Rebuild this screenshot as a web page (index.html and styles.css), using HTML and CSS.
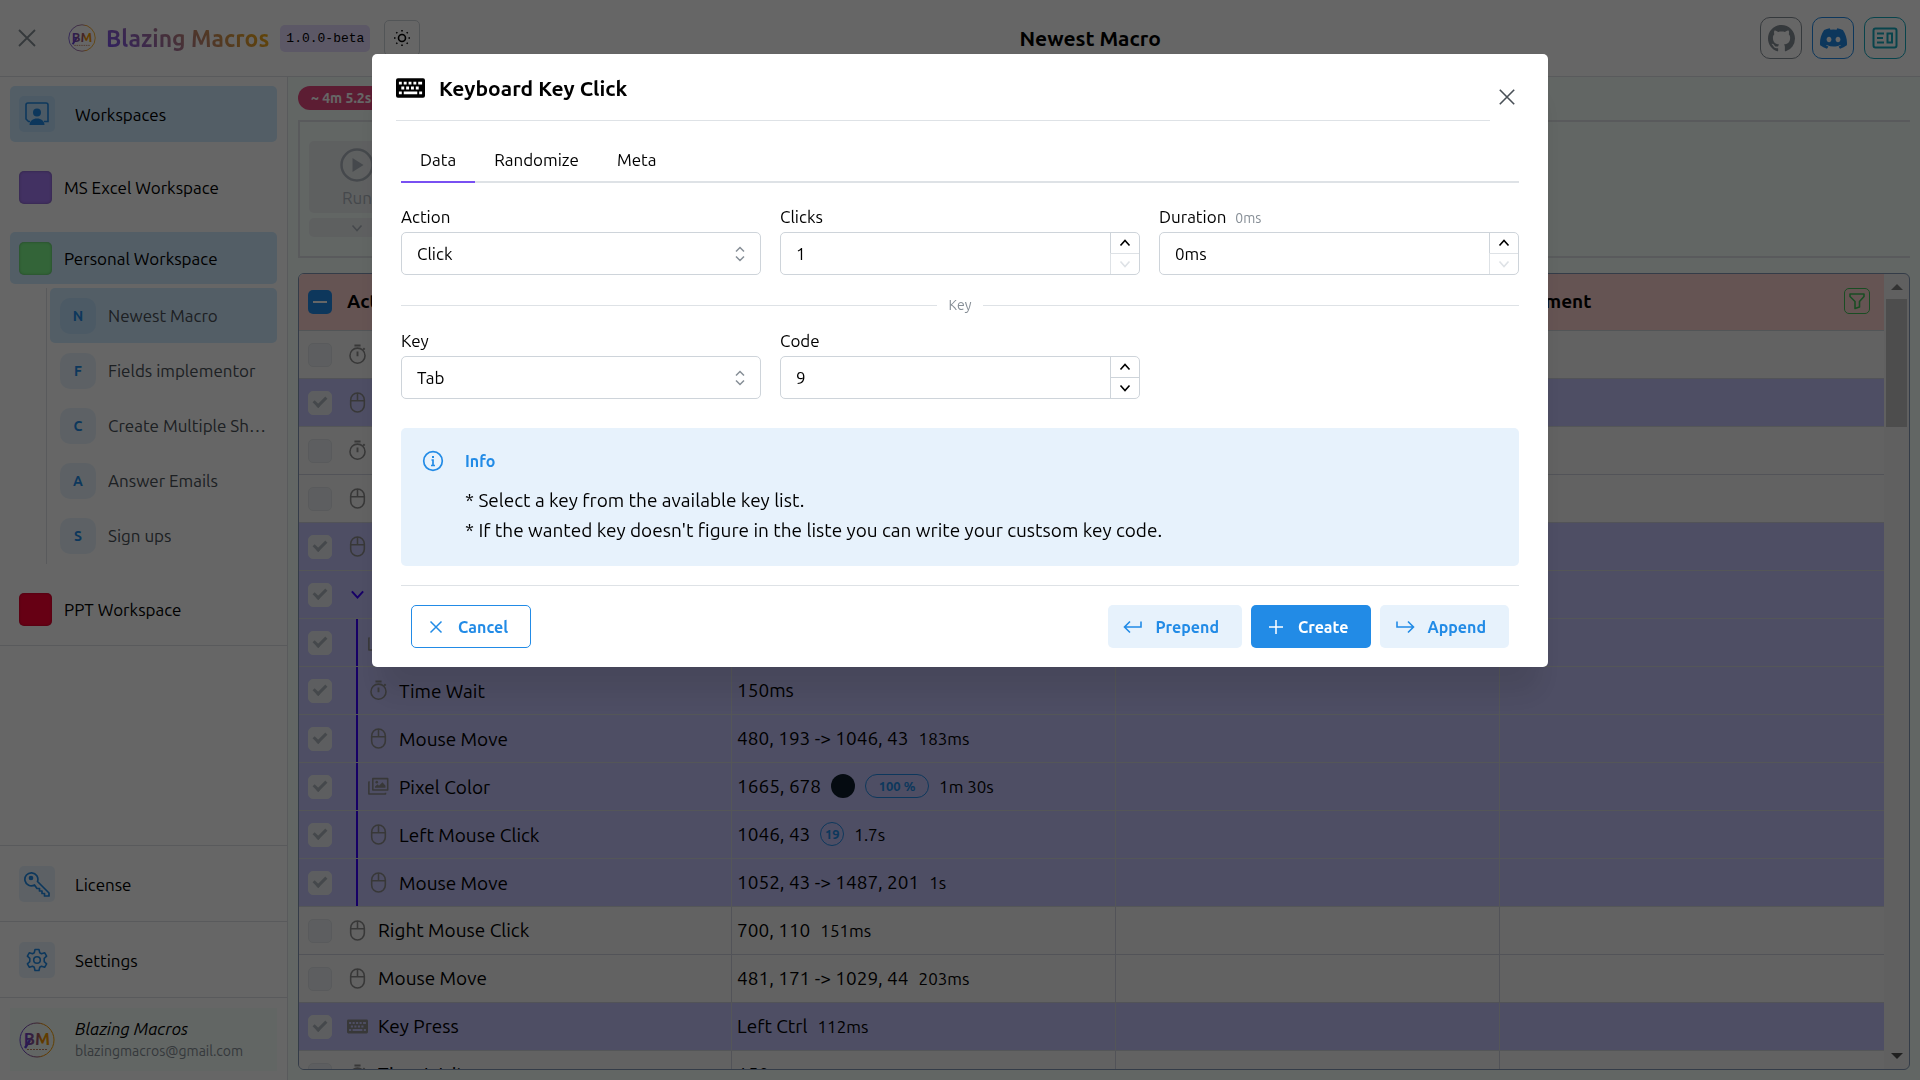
FILE: index.html
```html
<!DOCTYPE html>
<html lang="en">
<head>
    <meta charset="UTF-8">
    <meta name="viewport" content="width=device-width, initial-scale=1.0">
    <title>Blazing Macros</title>
    <link rel="stylesheet" href="styles.css">
</head>
<body>
    <!-- Shared icons -->
    <svg class="sprite" aria-hidden="true">
        <linearGradient id="logo-fill"><stop offset="0" stop-color="#6741d9"/><stop offset="0.550" stop-color="#9c5a6a"/><stop offset="0.650" stop-color="#f08c00"/><stop offset="1" stop-color="#f59f00"/></linearGradient>
        <symbol id="i-close" viewBox="0 0 20 20"><path d="M2 2l16 16M18 2L2 18" fill="none" stroke="currentColor" stroke-width="1.8"/></symbol>
        <symbol id="i-mouse" viewBox="0 0 24 24"><path d="M12 1.2a7.8 7.8 0 0 0-7.8 7.8v6a7.8 7.8 0 0 0 15.6 0V9A7.8 7.8 0 0 0 12 1.200zM12 1.200V10M4.200 10h15.600" fill="none" stroke="currentColor" stroke-width="1.800"/></symbol>
        <symbol id="i-timer" viewBox="0 0 24 24"><path d="M8.500 1.800h7M12 8.500v5.500M18.500 6.500l1.700-1.700" fill="none" stroke="currentColor" stroke-width="2.200"/><circle cx="12" cy="13.300" r="8.600" fill="none" stroke="currentColor" stroke-width="1.800"/></symbol>
        <symbol id="i-image" viewBox="0 0 24 24"><path d="M5.500 3h17v13h-17zM2 7H1v13.500h19V19" fill="none" stroke="currentColor" stroke-width="1.800" stroke-linejoin="round"/><path d="M8 13.500V12l3-2.500 1.500 1.500 4-4 3.500 4v2.500z" fill="currentColor"/><circle cx="10" cy="7" r="1.500" fill="currentColor"/></symbol>
        <symbol id="i-keyboard" viewBox="0 0 30 20"><path fill="currentColor" fill-rule="evenodd" d="M2 0h26a2 2 0 0 1 2 2v16a2 2 0 0 1-2 2H2a2 2 0 0 1-2-2V2a2 2 0 0 1 2-2zM3 3.500v3h3v-3zM8 3.500v3h3v-3zM13 3.500v3h3v-3zM18 3.500v3h3v-3zM23 3.500v3h4v-3zM5.500 8.500v3h3v-3zM10.500 8.500v3h3v-3zM15.500 8.500v3h3v-3zM20.500 8.500v3h3v-3zM3 13.500v3h3v-3zM8 13.500v3h14v-3zM24 13.500v3h3v-3z"/></symbol>
        <symbol id="i-down" viewBox="0 0 12 12"><path d="M1.500 3.500L6 8.500l4.500-5" fill="none" stroke="currentColor" stroke-width="1.600"/></symbol>
        <symbol id="i-up" viewBox="0 0 12 12"><path d="M1.500 8.500L6 3.500l4.500 5" fill="none" stroke="currentColor" stroke-width="1.600"/></symbol>
        <symbol id="i-updown" viewBox="0 0 12 18"><path d="M2 6.500l4-4 4 4M2 11.500l4 4 4-4" fill="none" stroke="currentColor" stroke-width="1.500"/></symbol>
    </svg>

    <header class="topbar">
        <button class="menu-close" aria-label="Close menu"><svg width="20" height="20"><use href="#i-close"/></svg></button>
        <svg class="brand-logo" width="28" height="28" viewBox="0 0 36 36">
            <circle cx="18" cy="18" r="17" fill="none" stroke="url(#logo-fill)"/>
            <path d="M6 26l5-8" stroke="#6741d9" stroke-width="2.500"/>
            <text x="18" y="23" text-anchor="middle" class="logo-text" fill="url(#logo-fill)">BM</text>
            <path d="M8 27.500h21" stroke="#c08060" stroke-dasharray="2 1"/>
        </svg>
        <span class="brand-name">Blazing Macros</span>
        <code class="version">1.0.0-beta</code>
        <button class="theme-button" aria-label="Toggle theme">
            <svg width="20" height="20" viewBox="0 0 20 20" fill="none" stroke="currentColor" stroke-width="1.600"><circle cx="10" cy="10" r="3.500"/><path d="M10 2v1.500M10 16.500V18M2 10h1.500M16.500 10H18M4.300 4.300l1 1M14.700 14.700l1 1M4.300 15.700l1-1M14.700 5.300l1-1"/></svg>
        </button>
        <h1 class="page-title">Newest Macro</h1>
        <nav class="social">
            <a href="#" class="social-link github" aria-label="GitHub"><svg width="27" height="27" viewBox="0 0 16 16"><path fill="currentColor" d="M8 0C3.580 0 0 3.580 0 8c0 3.540 2.290 6.530 5.470 7.590.4.070.55-.17.55-.38 0-.19-.01-.82-.01-1.490-2.010.37-2.530-.49-2.690-.94-.09-.23-.48-.94-.82-1.130-.28-.15-.68-.52-.01-.53.63-.01 1.080.58 1.230.82.72 1.210 1.870.87 2.330.66.07-.52.28-.87.51-1.070-1.780-.2-3.640-.89-3.640-3.950 0-.87.31-1.590.82-2.150-.08-.2-.36-1.020.08-2.120 0 0 .67-.21 2.200.82.64-.18 1.320-.27 2-.27s1.360.09 2 .27c1.530-1.040 2.200-.82 2.200-.82.44 1.100.16 1.920.08 2.120.51.56.82 1.270.82 2.150 0 3.070-1.870 3.750-3.650 3.950.29.25.54.73.54 1.480 0 1.070-.01 1.930-.01 2.200 0 .21.15.46.55.38A8.010 8.010 0 0 0 16 8c0-4.420-3.580-8-8-8z"/></svg></a>
            <a href="#" class="social-link discord" aria-label="Discord"><svg width="27" height="27" viewBox="0 0 16 16"><path fill="currentColor" d="M13.545 2.907a13.200 13.200 0 0 0-3.257-1.011.05.05 0 0 0-.052.025c-.141.25-.297.577-.406.833a12.200 12.200 0 0 0-3.658 0 8 8 0 0 0-.412-.833.05.05 0 0 0-.052-.025c-1.125.194-2.220.534-3.257 1.011a.04.04 0 0 0-.021.018C.356 6.024-.213 9.047.066 12.032q.003.022.021.037a13.300 13.300 0 0 0 3.995 2.020.05.05 0 0 0 .056-.019q.463-.63.818-1.329a.05.05 0 0 0-.01-.059l-.018-.011a9 9 0 0 1-1.248-.595.05.05 0 0 1-.02-.066l.015-.019q.127-.095.248-.195a.05.05 0 0 1 .051-.007c2.619 1.196 5.454 1.196 8.041 0a.05.05 0 0 1 .053.007q.121.100.248.195a.05.05 0 0 1-.004.085 8 8 0 0 1-1.249.594.05.05 0 0 0-.030.030.05.05 0 0 0 .003.041c.240.465.515.909.817 1.329a.05.05 0 0 0 .056.019 13.200 13.200 0 0 0 4.001-2.020.05.05 0 0 0 .021-.037c.334-3.451-.559-6.449-2.366-9.106a.03.03 0 0 0-.020-.019M5.347 10.214c-.789 0-1.438-.724-1.438-1.612s.637-1.613 1.438-1.613c.807 0 1.450.730 1.438 1.613 0 .888-.637 1.612-1.438 1.612m5.316 0c-.788 0-1.438-.724-1.438-1.612s.637-1.613 1.438-1.613c.807 0 1.451.730 1.438 1.613 0 .888-.631 1.612-1.438 1.612"/></svg></a>
            <a href="#" class="social-link news" aria-label="News"><svg width="26" height="26" viewBox="0 0 26 26" fill="none" stroke="currentColor" stroke-width="2"><rect x="1.500" y="3.500" width="23" height="19" rx="2"/><path d="M5 8.500h7M5 13h6M5 17.500h7"/><rect x="15.500" y="8.500" width="4.500" height="9"/></svg></a>
        </nav>
    </header>

    <div class="layout">
        <aside class="sidebar">
            <a href="#" class="nav-item active">
                <span class="nav-icon"><svg width="24" height="24" viewBox="0 0 24 24"><path d="M5 19.500H3.500L1 17V3a2 2 0 0 1 2-2h18a2 2 0 0 1 2 2v16.500h-4" fill="none" stroke="currentColor" stroke-width="1.600"/><circle cx="12" cy="10.500" r="4" fill="currentColor"/><path d="M4.500 23c0-4 3.500-6.500 7.500-6.500s7.500 2.500 7.500 6.500z" fill="currentColor"/></svg></span>
                Workspaces
            </a>
            <a href="#" class="workspace"><span class="swatch violet"></span>MS Excel Workspace</a>
            <div>
                <a href="#" class="workspace active"><span class="swatch green"></span>Personal Workspace</a>
                <div class="macros">
                    <a href="#" class="macro active"><span class="letter">N</span><span class="macro-name">Newest Macro</span></a>
                    <a href="#" class="macro"><span class="letter">F</span><span class="macro-name">Fields implementor</span></a>
                    <a href="#" class="macro"><span class="letter">C</span><span class="macro-name">Create Multiple Sheets</span></a>
                    <a href="#" class="macro"><span class="letter">A</span><span class="macro-name">Answer Emails</span></a>
                    <a href="#" class="macro"><span class="letter">S</span><span class="macro-name">Sign ups</span></a>
                </div>
            </div>
            <a href="#" class="workspace"><span class="swatch red"></span>PPT Workspace</a>

            <div class="sidebar-bottom">
                <div class="section">
                    <a href="#" class="nav-item">
                        <span class="nav-icon"><svg width="26" height="26" viewBox="0 0 26 26" fill="none" stroke="currentColor" stroke-width="1.700" stroke-linejoin="round"><path d="M13.500 10.500L25 22v3h-4.500v-2.500H18v-2.500h-2.500v-2.500H13L10.500 14A6.500 6.500 0 1 1 13.500 10.500z"/><circle cx="7" cy="7" r="1.500" fill="currentColor"/></svg></span>
                        License
                    </a>
                </div>
                <div class="section">
                    <a href="#" class="nav-item">
                        <span class="nav-icon"><svg width="24" height="24" viewBox="0 0 24 24" fill="none" stroke="currentColor" stroke-width="1.600" stroke-linejoin="round"><path d="M10 1.500h4l.7 3.200 1.800 1 3.100-1 2 3.500-2.400 2.200v3.200l2.400 2.200-2 3.500-3.100-1-1.800 1-.7 3.200h-4l-.7-3.200-1.800-1-3.100 1-2-3.500 2.400-2.200v-3.200L2.400 8.200l2-3.500 3.100 1 1.800-1z"/><circle cx="12" cy="12" r="3.300"/></svg></span>
                        Settings
                    </a>
                </div>
                <div class="section">
                    <div class="user">
                        <svg width="36" height="36" viewBox="0 0 36 36">
                            <circle cx="18" cy="18" r="17" fill="none" stroke="url(#logo-fill)"/>
                            <path d="M6 26l5-8" stroke="#6741d9" stroke-width="2.500"/>
                            <text x="18" y="23" text-anchor="middle" class="logo-text" fill="url(#logo-fill)">BM</text>
                            <path d="M8 27.500h21" stroke="#c08060" stroke-dasharray="2 1"/>
                        </svg>
                        <div>
                            <div class="user-name">Blazing Macros</div>
                            <div class="user-mail">blazingmacros@gmail.com</div>
                        </div>
                    </div>
                </div>
            </div>
        </aside>

        <main class="main">
            <span class="estimate">~ 4m 5.2s</span>
            <div class="toolbar">
                <div class="run-group">
                    <button class="run" disabled><svg width="34" height="34" viewBox="0 0 34 34"><circle cx="17" cy="17" r="15.500" fill="none" stroke="currentColor" stroke-width="2.500"/><path d="M12.500 10l11 7-11 7z" fill="currentColor"/></svg>Run</button>
                    <button class="run-more" disabled aria-label="Run options"><svg width="12" height="12"><use href="#i-down"/></svg></button>
                </div>
            </div>

            <div class="table-box">
                <div class="table-scroll">
                    <table class="actions">
                        <colgroup><col class="col-check"><col class="col-action"><col><col><col></colgroup>
                        <thead>
                            <tr>
                                <th><button class="select-all" aria-label="Select all"></button></th>
                                <th>Action</th>
                                <th>Data</th>
                                <th>Meta</th>
                                <th><div class="head-cell">Comment
                                    <button class="filter" aria-label="Filter"><svg width="18" height="18" viewBox="0 0 18 18" fill="none" stroke="currentColor" stroke-width="1.600" stroke-linejoin="round"><path d="M2 2h14v2.500l-4.500 5V15l-4.500 1.500V9.500L2 4.500z"/></svg></button>
                                </div></th>
                            </tr>
                        </thead>
                        <tbody>
                            <tr><td><input type="checkbox" disabled aria-label="Select row"></td><td><div class="cell"><svg><use href="#i-timer"/></svg>Time Wait</div></td><td></td><td></td><td></td></tr>
                            <tr class="selected"><td><input type="checkbox" checked disabled aria-label="Select row"></td><td><div class="cell"><svg><use href="#i-mouse"/></svg>Mouse Move</div></td><td></td><td></td><td></td></tr>
                            <tr><td><input type="checkbox" disabled aria-label="Select row"></td><td><div class="cell"><svg><use href="#i-timer"/></svg>Time Wait</div></td><td></td><td></td><td></td></tr>
                            <tr><td><input type="checkbox" disabled aria-label="Select row"></td><td><div class="cell"><svg><use href="#i-mouse"/></svg>Mouse Move</div></td><td></td><td></td><td></td></tr>
                            <tr class="selected"><td><input type="checkbox" checked disabled aria-label="Select row"></td><td><div class="cell"><svg><use href="#i-mouse"/></svg>Mouse Move</div></td><td></td><td></td><td></td></tr>
                            <tr class="selected"><td><input type="checkbox" checked disabled aria-label="Select row"></td><td><div class="cell group"><svg><use href="#i-down"/></svg>Loop</div></td><td></td><td></td><td></td></tr>
                            <tr class="selected nested"><td><input type="checkbox" checked disabled aria-label="Select row"></td><td><div class="cell"><svg><use href="#i-image"/></svg>Pixel Color</div></td><td></td><td></td><td></td></tr>
                            <tr class="selected nested"><td><input type="checkbox" checked disabled aria-label="Select row"></td><td><div class="cell"><svg><use href="#i-timer"/></svg>Time Wait</div></td><td>150ms</td><td></td><td></td></tr>
                            <tr class="selected nested"><td><input type="checkbox" checked disabled aria-label="Select row"></td><td><div class="cell"><svg><use href="#i-mouse"/></svg>Mouse Move</div></td><td><div class="values">480, 193 -&gt; 1046, 43 <small>183ms</small></div></td><td></td><td></td></tr>
                            <tr class="selected nested"><td><input type="checkbox" checked disabled aria-label="Select row"></td><td><div class="cell"><svg><use href="#i-image"/></svg>Pixel Color</div></td><td><div class="values">1665, 678 <span class="color-dot"></span><span class="pill percent">100 %</span><small>1m 30s</small></div></td><td></td><td></td></tr>
                            <tr class="selected nested"><td><input type="checkbox" checked disabled aria-label="Select row"></td><td><div class="cell"><svg><use href="#i-mouse"/></svg>Left Mouse Click</div></td><td><div class="values">1046, 43 <span class="pill">19</span><small>1.7s</small></div></td><td></td><td></td></tr>
                            <tr class="selected nested"><td><input type="checkbox" checked disabled aria-label="Select row"></td><td><div class="cell"><svg><use href="#i-mouse"/></svg>Mouse Move</div></td><td><div class="values">1052, 43 -&gt; 1487, 201 <small>1s</small></div></td><td></td><td></td></tr>
                            <tr><td><input type="checkbox" disabled aria-label="Select row"></td><td><div class="cell"><svg><use href="#i-mouse"/></svg>Right Mouse Click</div></td><td><div class="values">700, 110 <small>151ms</small></div></td><td></td><td></td></tr>
                            <tr><td><input type="checkbox" disabled aria-label="Select row"></td><td><div class="cell"><svg><use href="#i-mouse"/></svg>Mouse Move</div></td><td><div class="values">481, 171 -&gt; 1029, 44 <small>203ms</small></div></td><td></td><td></td></tr>
                            <tr class="selected"><td><input type="checkbox" checked disabled aria-label="Select row"></td><td><div class="cell"><svg><use href="#i-keyboard"/></svg>Key Press</div></td><td><div class="values">Left Ctrl <small>112ms</small></div></td><td></td><td></td></tr>
                            <tr><td><input type="checkbox" disabled aria-label="Select row"></td><td><div class="cell"><svg><use href="#i-timer"/></svg>Time Wait</div></td><td>150ms</td><td></td><td></td></tr>
                        </tbody>
                    </table>
                </div>
                <div class="scrollbar">
                    <span class="arrow-up"></span>
                    <span class="thumb"></span>
                    <span class="arrow-down"></span>
                </div>
            </div>
        </main>
    </div>

    <div class="overlay">
        <div class="modal" role="dialog" aria-labelledby="modal-title">
            <div class="modal-header">
                <h2 class="modal-title" id="modal-title"><svg width="29" height="20"><use href="#i-keyboard"/></svg>Keyboard Key Click</h2>
                <button class="modal-close" aria-label="Close"><svg width="18" height="18"><use href="#i-close"/></svg></button>
            </div>
            <div class="modal-body">
                <div class="tabs" role="tablist">
                    <button class="tab active" role="tab" aria-selected="true">Data</button>
                    <button class="tab" role="tab">Randomize</button>
                    <button class="tab" role="tab">Meta</button>
                </div>

                <div class="fields">
                    <div class="field">
                        <label for="action">Action</label>
                        <div class="control"><select id="action"><option>Click</option></select><svg class="select-icon" width="12" height="18"><use href="#i-updown"/></svg></div>
                    </div>
                    <div class="field">
                        <label for="clicks">Clicks</label>
                        <div class="control"><input id="clicks" type="text" value="1">
                            <div class="stepper"><button aria-label="Increase"><svg width="12" height="12"><use href="#i-up"/></svg></button><button disabled aria-label="Decrease"><svg width="12" height="12"><use href="#i-down"/></svg></button></div></div>
                    </div>
                    <div class="field">
                        <label for="duration">Duration <span class="hint">0ms</span></label>
                        <div class="control"><input id="duration" type="text" value="0ms">
                            <div class="stepper"><button aria-label="Increase"><svg width="12" height="12"><use href="#i-up"/></svg></button><button disabled aria-label="Decrease"><svg width="12" height="12"><use href="#i-down"/></svg></button></div></div>
                    </div>
                </div>

                <div class="divider">Key</div>

                <div class="fields">
                    <div class="field">
                        <label for="key">Key</label>
                        <div class="control"><select id="key"><option>Tab</option></select><svg class="select-icon" width="12" height="18"><use href="#i-updown"/></svg></div>
                    </div>
                    <div class="field">
                        <label for="code">Code</label>
                        <div class="control"><input id="code" type="text" value="9">
                            <div class="stepper"><button aria-label="Increase"><svg width="12" height="12"><use href="#i-up"/></svg></button><button aria-label="Decrease"><svg width="12" height="12"><use href="#i-down"/></svg></button></div></div>
                    </div>
                </div>

                <div class="info">
                    <svg width="24" height="24" viewBox="0 0 24 24" fill="none" stroke="currentColor" stroke-width="1.700"><circle cx="12" cy="12" r="9.300"/><path d="M10.500 11H12v5.500M10 16.500h4"/><path d="M12 7v2" stroke-width="2"/></svg>
                    <div>
                        <div class="info-title">Info</div>
                        <p>* Select a key from the available key list.</p>
                        <p>* If the wanted key doesn't figure in the liste you can write your custsom key code.</p>
                    </div>
                </div>

                <div class="modal-footer">
                    <button class="btn outline"><svg width="20" height="20" viewBox="0 0 20 20" fill="none" stroke="currentColor" stroke-width="1.500"><path d="M4.500 4.500l11 11M15.500 4.500l-11 11"/></svg>Cancel</button>
                    <button class="btn light push"><svg width="20" height="20" viewBox="0 0 20 20" fill="none" stroke="currentColor" stroke-width="1.600"><path d="M18 4.500V10H2M7 4.500L1.500 10 7 15.500"/></svg>Prepend</button>
                    <button class="btn filled"><svg width="20" height="20" viewBox="0 0 20 20" fill="none" stroke="currentColor" stroke-width="1.500"><path d="M10 3v14M3 10h14"/></svg>Create</button>
                    <button class="btn light"><svg width="20" height="20" viewBox="0 0 20 20" fill="none" stroke="currentColor" stroke-width="1.600"><path d="M2 4.500V10h16M13 4.500l5.500 5.500-5.500 5.500"/></svg>Append</button>
                </div>
            </div>
        </div>
    </div>
</body>
</html>
```

FILE: styles.css
```css
* {
    box-sizing: border-box;
}

body {
    margin: 0;
    height: 100vh;
    display: flex;
    flex-direction: column;
    overflow: hidden;
    font-family: Ubuntu, "Noto Sans", sans-serif;
    font-size: 17px;
    color: #000;
    background-color: #fff;
}

a {
    color: inherit;
    text-decoration: none;
}

button, input, select {
    font: inherit;
    color: inherit;
}

button {
    display: flex;
    align-items: center;
    justify-content: center;
    padding: 0;
    border: none;
    background: none;
    cursor: pointer;
}

.sprite {
    position: absolute;
    width: 0;
    height: 0;
}

.logo-text {
    font-size: 17px;
    font-weight: bold;
}

/* Top bar */
.topbar {
    display: flex;
    align-items: center;
    height: 77px;
    padding: 0 14px 0 17px;
    border-bottom: 1px solid #dee2e6;
    flex-shrink: 0;
}

.menu-close {
    color: #868e96;
}

.brand-logo {
    margin-left: 31px;
}

.brand-name {
    margin-left: 10px;
    font-size: 23px;
    font-weight: bold;
    background: linear-gradient(45deg, #7950f2, #fab005);
    background-clip: text;
    -webkit-background-clip: text;
    color: transparent;
}

.version {
    margin-left: 11px;
    padding: 0 6px;
    border-radius: 5px;
    background-color: #e5dbff;
    font-family: "Liberation Mono", monospace;
    font-size: 13px;
    line-height: 27px;
}

.theme-button {
    margin-left: 14px;
    width: 36px;
    height: 36px;
    border: 1px solid #ced4da;
    border-radius: 5px;
}

.page-title {
    flex: 1;
    margin: 0;
    text-align: center;
    font-size: 21px;
    font-weight: bold;
}

.social {
    display: flex;
    gap: 10px;
}

.social-link {
    display: flex;
    align-items: center;
    justify-content: center;
    width: 42px;
    height: 42px;
    border: 1px solid;
    border-radius: 10px;
}

.github {
    color: #868e96;
}

.discord {
    color: #228be6;
}

.news {
    color: #15aabf;
}

/* Sidebar */
.layout {
    display: flex;
    flex: 1;
    min-height: 0;
}

.sidebar {
    display: flex;
    flex-direction: column;
    gap: 19px;
    width: 288px;
    padding-top: 9px;
    border-right: 1px solid #dee2e6;
    flex-shrink: 0;
}

.nav-item, .workspace {
    display: flex;
    align-items: center;
    margin: 0 10px;
    padding: 0 9px;
    border-radius: 5px;
}

.nav-item {
    gap: 20px;
    height: 56px;
}

.workspace {
    gap: 12px;
    height: 52px;
}

.nav-item.active, .workspace.active, .macro.active {
    background-color: #d0ebff;
}

.nav-icon {
    display: flex;
    align-items: center;
    justify-content: center;
    width: 36px;
    height: 36px;
    border-radius: 5px;
    background-color: rgba(34, 139, 230, 0.1);
    color: #228be6;
}

.swatch {
    width: 33px;
    height: 33px;
    border-radius: 5px;
    box-shadow: inset 0 0 3px rgba(0, 0, 0, 0.3);
}

.violet {
    background-color: #a67af4;
}

.green {
    background-color: #7ffa8c;
}

.red {
    background-color: #ff0033;
}

.macros {
    margin: 4px 10px 0 46px;
    padding: 0 0 1px 3px;
    border-left: 1px solid #dee2e6;
}

.macro {
    display: flex;
    align-items: center;
    gap: 12px;
    height: 55px;
    padding: 0 10px;
    border-radius: 5px;
    color: #495057;
}

.macro-name {
    overflow: hidden;
    white-space: nowrap;
    text-overflow: ellipsis;
}

.letter {
    display: flex;
    align-items: center;
    justify-content: center;
    width: 36px;
    height: 36px;
    border-radius: 10px;
    background-color: rgba(34, 139, 230, 0.1);
    color: #228be6;
    font-size: 14px;
    font-weight: bold;
    flex-shrink: 0;
}

.sidebar-bottom {
    flex: 1;
    display: flex;
    flex-direction: column;
    margin-top: -9px;
    border-top: 1px solid #dee2e6;
}

.section {
    padding: 10px 0 9px;
    border-top: 1px solid #dee2e6;
}

.section:first-child {
    margin-top: auto;
}

.user {
    display: flex;
    align-items: center;
    gap: 20px;
    margin: 0 10px;
    padding: 9px;
    background-color: #f5fffa;
}

.user-name {
    font-style: italic;
    line-height: 24px;
}

.user-mail {
    font-size: 14px;
    line-height: 21px;
    color: #868e96;
}

/* Main area */
.main {
    flex: 1;
    min-width: 0;
    display: flex;
    flex-direction: column;
    padding: 9px 10px 10px;
    background-color: #f5fffa;
}

.estimate {
    align-self: flex-start;
    padding: 0 13px;
    border-radius: 12px;
    background-color: #e64980;
    color: #fff;
    font-size: 14px;
    font-weight: bold;
    line-height: 24px;
}

.toolbar {
    height: 138px;
    margin: 10px 0 15px;
    padding: 19px 9px;
    border: 2px solid #dee2e6;
    border-right: none;
    flex-shrink: 0;
}

.run-group {
    display: flex;
    flex-direction: column;
    gap: 5px;
    width: 96px;
    color: #adb5bd;
}

.run, .run-more {
    border-radius: 5px;
    background-color: #eceff1;
}

.run {
    flex-direction: column;
    gap: 6px;
    height: 72px;
}

.run-more {
    height: 19px;
}

.table-box {
    display: flex;
    flex: 1;
    min-height: 0;
    border: 1px solid #8296b4;
    border-radius: 6px;
    overflow: hidden;
    background-color: #f1f1f1;
}

.table-scroll {
    flex: 1;
    min-width: 0;
    overflow: hidden;
}

.actions {
    width: 100%;
    table-layout: fixed;
    border-collapse: separate;
    border-spacing: 0;
    background-color: #f5f5f5;
    font-size: 19px;
}

.col-check {
    width: 43px;
}

.col-action {
    width: 390px;
}

.actions th {
    height: 57px;
    padding: 0 5px 2px;
    border-bottom: 1px solid #ced4da;
    background-color: #fdd2d0;
    text-align: left;
    font-weight: bold;
}

.actions td {
    height: 48px;
    padding: 0 5px 1px;
    border-bottom: 1px solid #cdd0dc;
    border-right: 1px solid #cdd0dc;
    white-space: nowrap;
}

.actions td:first-child, .actions th:first-child {
    padding: 0 9px;
    border-right: none;
}

.actions td:last-child {
    border-right: none;
}

.selected {
    background-color: #c3c3fa;
}

.actions .selected td {
    border-color: #d2d6dc;
}

.head-cell {
    display: flex;
    align-items: center;
    justify-content: space-between;
    padding-right: 9px;
}

.filter {
    width: 26px;
    height: 26px;
    border: 1px solid #40c057;
    border-radius: 5px;
    color: #40c057;
}

.select-all {
    width: 24px;
    height: 24px;
    border-radius: 5px;
    background-color: #228be6;
}

.select-all::after {
    content: "";
    width: 14px;
    height: 2px;
    background-color: #fff;
}

.actions input {
    appearance: none;
    display: grid;
    place-items: center;
    width: 24px;
    height: 24px;
    margin: 0;
    border: 1px solid #dee2e6;
    border-radius: 5px;
    background-color: #e9ecef;
}

.actions input:checked {
    border-color: #e9ecef;
}

.actions input:checked::after {
    content: "";
    width: 5px;
    height: 10px;
    margin-top: -4px;
    border: solid #adb5bd;
    border-width: 0 3px 3px 0;
    transform: rotate(45deg);
}

.cell {
    display: flex;
    align-items: center;
    gap: 10px;
    height: 46px;
}

.cell svg {
    width: 21px;
    height: 21px;
    color: #8c8c8c;
}

.cell.group svg {
    padding: 3px;
    color: #3800ff;
}

.nested td:nth-child(2) {
    padding-bottom: 0;
}

.nested .cell {
    height: 47px;
    margin-left: 9px;
    padding-left: 10px;
    border-left: 2px solid #3800ff;
}

.values {
    display: flex;
    align-items: center;
    gap: 10px;
}

.values small {
    font-size: 17px;
}

.color-dot {
    width: 24px;
    height: 24px;
    border-radius: 50%;
    background-color: #0e1d2b;
}

.pill {
    min-width: 24px;
    border: 1px solid #228be6;
    border-radius: 12px;
    color: #228be6;
    font-size: 13px;
    font-weight: bold;
    line-height: 22px;
    text-align: center;
}

.percent {
    width: 64px;
}

.scrollbar {
    display: flex;
    flex-direction: column;
    align-items: center;
    width: 25px;
    padding: 10px 0;
}

.arrow-up, .arrow-down {
    border: 6px solid transparent;
}

.arrow-up {
    border-top: none;
    border-bottom-color: #808080;
}

.thumb {
    width: 21px;
    height: 128px;
    margin-top: 9px;
    background-color: #c1c1c1;
}

.arrow-down {
    margin-top: auto;
    border-bottom: none;
    border-top-color: #505050;
}

/* Modal */
.overlay {
    position: fixed;
    inset: 0;
    display: flex;
    justify-content: center;
    align-items: flex-start;
    padding: 5vh;
    background-color: rgba(0, 0, 0, 0.6);
}

.modal {
    width: 1176px;
    border-radius: 5px;
    background-color: #fff;
    box-shadow: 0 1px 4px rgba(0, 0, 0, 0.05), 0 34px 28px -8px rgba(0, 0, 0, 0.1);
}

.modal-header {
    display: flex;
    align-items: flex-start;
    padding: 19px 24px 0;
}

.modal-title {
    flex: 1;
    display: flex;
    align-items: center;
    gap: 14px;
    height: 48px;
    margin: 0;
    padding-bottom: 17px;
    border-bottom: 1px solid #dee2e6;
    font-size: 21px;
    font-weight: bold;
}

.modal-close {
    width: 34px;
    height: 48px;
    color: #495057;
}

.modal-body {
    padding: 15px 29px 19px;
}

.tabs {
    display: flex;
    border-bottom: 2px solid #dee2e6;
}

.tab {
    height: 47px;
    margin-bottom: -2px;
    padding: 1px 19px 0;
    border-bottom: 2px solid transparent;
}

.tab.active {
    border-color: #7950f2;
}

.fields {
    display: grid;
    grid-template-columns: repeat(3, 1fr);
    gap: 19px;
}

.tabs + .fields {
    margin-top: 20px;
}

.field label {
    display: block;
    margin-bottom: 2px;
    line-height: 27px;
}

.hint {
    margin-left: 5px;
    font-size: 14px;
    line-height: 14px;
    color: #868e96;
}

.control {
    display: flex;
    position: relative;
    height: 43px;
    border: 1px solid #ced4da;
    border-radius: 5px;
    overflow: hidden;
}

.control input, .control select {
    flex: 1;
    min-width: 0;
    padding: 0 15px;
    border: none;
    outline: none;
    appearance: none;
    background: none;
}

.select-icon {
    position: absolute;
    right: 14px;
    top: 12px;
    color: #868e96;
    pointer-events: none;
}

.stepper {
    display: flex;
    flex-direction: column;
    width: 29px;
}

.stepper button {
    flex: 1;
    border-left: 1px solid #ced4da;
}

.stepper button + button {
    border-top: 1px solid #ced4da;
}

.stepper button:disabled {
    color: #dee2e6;
    border-color: #dee2e6;
}

.divider {
    display: flex;
    align-items: center;
    gap: 12px;
    margin: 20px 0 12px;
    font-size: 14px;
    line-height: 20px;
    color: #868e96;
}

.divider::before, .divider::after {
    content: "";
    flex: 1;
    border-top: 1px solid #dee2e6;
}

.info {
    display: flex;
    gap: 20px;
    margin: 29px 0 19px;
    padding: 20px 20px 21px;
    border-radius: 5px;
    background-color: #e7f2fc;
    font-size: 19px;
    line-height: 30px;
}

.info svg {
    margin-top: 1px;
    color: #228be6;
}

.info-title {
    margin-bottom: 11px;
    font-size: 16px;
    font-weight: bold;
    line-height: 26px;
    color: #228be6;
}

.info p {
    margin: 0;
}

.modal-footer {
    display: flex;
    gap: 9px;
    padding: 19px 10px 0;
    border-top: 1px solid #dee2e6;
}

.btn {
    gap: 12px;
    height: 43px;
    padding: 0 22px 0 14px;
    border: 1px solid transparent;
    border-radius: 5px;
    font-size: 16px;
    font-weight: bold;
    color: #228be6;
}

.outline {
    border-color: #228be6;
}

.light {
    background-color: #e7f2fc;
}

.filled {
    background-color: #228be6;
    color: #fff;
}

.push {
    margin-left: auto;
}
```
